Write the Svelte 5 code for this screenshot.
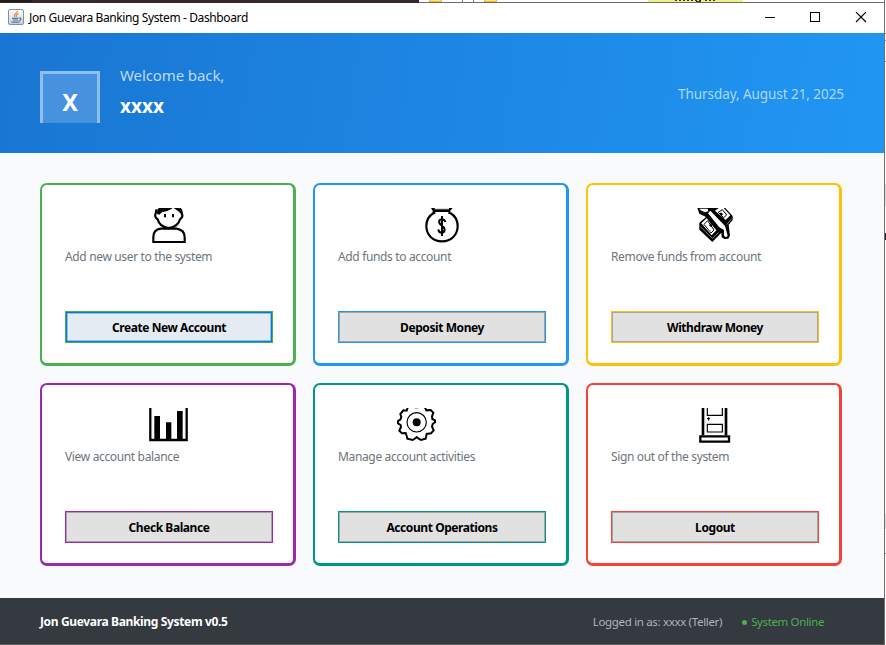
<script>
  const cards = [
    { icon: 'user', view: '357 99 120 105', offset: 84, text: 'Add new user to the system', action: 'Create New Account', color: '#4caf50', focused: true },
    { icon: 'bag', view: '351 99 120 105', offset: 84, text: 'Add funds to account', action: 'Deposit Money', color: '#2196f3' },
    { icon: 'cash', view: '345 99 120 105', offset: 84, text: 'Remove funds from account', action: 'Withdraw Money', color: '#ffc107' },
    { icon: 'chart', view: '357 99 120 105', offset: 84, text: 'View account balance', action: 'Check Balance', color: '#9c27b0' },
    { icon: 'gear', view: '273 99 120 105', offset: 58, text: 'Manage account activities', action: 'Account Operations', color: '#009688' },
    { icon: 'door', view: '345 99 120 105', offset: 84, text: 'Sign out of the system', action: 'Logout', color: '#f44336' }
  ];
</script>

<div class="desktop">
  <svg class="backdrop" width="886" height="645" viewBox="0 0 886 645" shape-rendering="crispEdges">
    <path fill="#fff" d="M0 0h886v645H0z" />
    <path fill="#35282c" d="M0 0h419v3H0z" />
    <path fill="#241b1f" d="M0 0h32v2H0z" />
    <path fill="#6b6b6b" d="M419 2h466v1H419z" />
    <path fill="#ffe27a" stroke="#e9b93c" d="M429.500-1v2.500h12V-1M484.500-1v2.500h12V-1" />
    <path fill="none" stroke="#777" d="M462.500 0v2M473.500 0v2" />
    <path fill="#f2ef84" d="M648 0h95v2h-95z" />
    <path stroke="#333" stroke-dasharray="2 2" d="M675 .5h26M705 .5h10" />
    <path stroke="#333" d="M696 1.500h5" />
    <path fill="#ddd" d="M885 184h1v22h-1zM885 514h1v15h-1z" />
    <path fill="#888" d="M885 33h1v1h-1zM885 40h1v1h-1zM885 61h1v1h-1zM885 553h1v1h-1z" />
    <path fill="#223" d="M885 233h1v7h-1z" />
  </svg>

  <main class="window">
    <div class="titlebar">
      <svg class="java" width="16" height="16" viewBox="0 0 16 16">
        <defs><linearGradient id="tile" x1="0" y1="0" x2="0" y2="1"><stop offset="0" stop-color="#fff" /><stop offset="1" stop-color="#c3d0dd" /></linearGradient></defs>
        <rect x=".5" y=".5" width="15" height="15" rx="1.500" fill="url(#tile)" stroke="#7f91a3" />
        <path d="M9.500 2C10 4 5.300 5 6.500 8M10.500 4.500C7.500 6 8.500 6.500 8.300 8" fill="none" stroke="#ed8730" stroke-width="1.300" />
        <path d="M4 9.300h6.500M5 11h5M3.500 13.200h8M11 9c3-.5 2 2.500 0 2.500" fill="none" stroke="#527b9e" stroke-width="1.200" />
      </svg>
      <span class="title">Jon Guevara Banking System - Dashboard</span>
      <svg class="controls" width="102" height="11" viewBox="0 0 102 11" fill="none" stroke="#000">
        <path d="M0 5.500h10M45.500.5h9v9h-9z" shape-rendering="crispEdges" />
        <path d="m91 0 10 10m0-10L91 10" stroke-width="1.100" />
      </svg>
    </div>

    <header>
      <div class="avatar"><span>X</span></div>
      <div class="greeting">
        <span class="welcome">Welcome back,</span>
        <strong>xxxx</strong>
      </div>
      <span class="date">Thursday, August 21, 2025</span>
    </header>

    <section class="grid">
      {#each cards as card}
        <article style="--accent: {card.color}">
          <svg class="icon" style="margin-left: {card.offset}px" width="40" height="35" viewBox={card.view} fill="none" stroke="#000" stroke-width="7">
            {#if card.icon === 'user'}
              <path d="M380 103c-3 7-3 10-3 13-3 4-1 14 6 17 4 17 15 24 33 26 19-2 30-10 34-26 8-5 8-12 5-17 1-7 0-11-6-16M370 201v-15q0-22 22-25h48q24 4 24 25v15z" stroke-width="6.500" />
              <path d="M387 99h41q-13 11-31 12l-9 8-8-3 3-14zM431 99h17l8 15-5 1-8-8z" fill="#000" stroke="none" />
              <path d="M405 117v10M429 117v10" stroke-width="6" />
            {:else if card.icon === 'bag'}
              <path d="M378 99h65l-7 8 1 10h-54v-10z" fill="#000" stroke="none" />
              <path d="M389 99h43v4h-43z" fill="#ddd" stroke="none" />
              <path d="M391 111h39v8h-39z" fill="#fff" stroke="none" />
              <path d="M386 114c-15 9-22 23-22 39 0 26 19 46 47 46s47-20 47-46c0-16-7-30-22-39" stroke-width="6.500" />
              <path d="M421 141q-3-10-12-8-8 2-6 10c2 9 17 10 16 21-1 12-18 12-19-1M411 123v60" stroke-width="6" />
            {:else if card.icon === 'cash'}
              <path d="m358 143 20-17-20-10-6-17h84l22 24v12l-12 14 4 33-5 9-12 1-8-5-1-14-27 28-39-37z" fill="#000" stroke="none" />
              <path d="m364 145 16-15 29 36-14 15zM405 107l11-8h15l20 22-14 14z" fill="#fff" stroke="none" />
              <path d="m384 115 7-8 44 46 8 29-5 5-6-5v-17l-14-8zM358 101h25l2 8-10 3-13-6z" fill="#fff" stroke="none" />
              <path d="m372 148 11-11 19 28-9 9zM415 112l12-8 13 16-9 8z" stroke-width="3" />
              <path d="m392 145 6 6-5 5-6-5zM423 112l6 6-4 4-6-6z" fill="#000" stroke="none" />
              <path d="m362 156 35 34 18-17M440 149l15-18" stroke="#fff" stroke-width="1.500" />
              <path d="m374 143 5 5M388 170l6-5M433 107l7 9" stroke="#d6bd79" stroke-width="2" />
            {:else if card.icon === 'chart'}
              <path d="M361 99v96h109V99" />
              <path d="M373 123h17v69h-17zM408 142h16v50h-16zM441 108h17v84h-17z" fill="#000" stroke="none" />
              <path d="M366 99v90M464 99v90" stroke="#b9dff5" stroke-width="1" />
            {:else if card.icon === 'gear'}
              <path d="m308 99-3 8-10-1-9 11 3 9-3 8-7 4v7l8 5 1 6-5 11 8 8 11-1 4 12 1 5 16 4 8-5 4-4 5 4 8 5 14-4 3-14 13-2 8-9-5-11 2-8 7-5v-6l-8-4-1-8 4-11-8-8-13 1-4-8" stroke-width="6" />
              <circle cx="335" cy="142" r="29" stroke-width="3.500" />
              <circle cx="335" cy="142" r="12" fill="#000" stroke="none" />
              <path d="M329 100h11" stroke="#777" stroke-width="2" />
            {:else}
              <path d="M369 99v82M438 99v82" stroke-width="8" />
              <path d="M361 184h86v16h-86z" />
              <path d="M382 99v22h45V99M382 148h45v23h-45z" stroke-width="3.500" />
              <path d="M386 126v11M381 131h9" stroke-width="3" />
              <path d="M375 99v78M431 99v78" stroke="#b9dff5" stroke-width="1" />
            {/if}
          </svg>
          <p>{card.text}</p>
          <button class:focused={card.focused}>{card.action}</button>
        </article>
      {/each}
    </section>

    <footer>
      <strong>Jon Guevara Banking System v0.5</strong>
      <span class="login">Logged in as: xxxx (Teller)</span>
      <i></i>
      <span class="online">System Online</span>
    </footer>
  </main>
</div>

<style>
  .desktop { position: relative; width: 886px; height: 645px; overflow: hidden; font-family: "Noto Sans", "Open Sans", sans-serif; }
  .backdrop { position: absolute; inset: 0; }
  .window { position: relative; box-sizing: border-box; width: 885px; height: 645px; padding-top: 3px; border-right: 1px solid #707070; border-bottom: 1px solid #5e5e5e; display: flex; flex-direction: column; white-space: nowrap; }
  .titlebar { height: 30px; flex: none; box-sizing: border-box; padding: 0 17px 0 8px; display: flex; align-items: center; background: #fff; }
  .java { margin-top: -2px; }
  .title { margin-left: 5px; font-size: 12px; letter-spacing: -.385px; line-height: 20px; color: #000; }
  .controls { margin-left: auto; margin-top: -1px; }
  header { height: 120px; flex: none; box-sizing: border-box; padding: 0 40px; display: flex; background: linear-gradient(98deg, #1976d2, #2196f3); color: #fff; }
  .avatar { box-sizing: border-box; width: 60px; height: 52px; margin-top: 38px; border: 3px solid #8fbfeb; border-bottom: 0; background: #4692de; text-align: center; font-size: 23.5px; font-weight: 700; line-height: 56px; }
  .greeting { margin: 32px 0 0 20px; display: flex; flex-direction: column; }
  .welcome { font-size: 15px; letter-spacing: -.1px; line-height: 21px; color: #bddaf5; }
  .greeting strong { font-size: 19px; line-height: 26px; margin-top: 7px; }
  .date { margin: 51px 0 0 auto; font-size: 13.5px; letter-spacing: -.06px; line-height: 20px; color: #add8fb; }
  .grid { flex: 1; box-sizing: border-box; padding: 30px 40px; display: grid; grid-template-columns: repeat(3, 256px); grid-template-rows: repeat(2, 183px); gap: 17px; background: #f8fafc; }
  article { box-sizing: border-box; border: solid var(--accent); border-width: 2px 3px 3px 2px; border-radius: 7px; padding: 23px 20px 20px 23px; display: flex; flex-direction: column; background: #fff; }
  .icon { display: block; flex: none; }
  p { margin: 5px 0 0; font-size: 12px; letter-spacing: -.35px; line-height: 18px; color: #6c757d; }
  button { box-sizing: border-box; width: 208px; height: 32px; margin: auto 0 0; padding: 1px 0 0; border: 1px solid var(--accent); border-radius: 0; background: #e1e1e1; box-shadow: inset 0 0 0 1px #a5a5a5; font: 700 12px/29px "Noto Sans", "Open Sans", sans-serif; letter-spacing: -.42px; color: #000; }
  button.focused { background: #e4ebf3; box-shadow: inset 0 0 0 1px #0078d7, inset 0 0 0 2px #8ec3ef; }
  footer { height: 46px; flex: none; box-sizing: border-box; padding: 1px 60px 0 40px; display: flex; align-items: center; background: #343a40; font-size: 11.5px; letter-spacing: -.33px; line-height: 18px; color: #adb5bd; }
  footer strong { margin-right: auto; font-size: 12px; letter-spacing: -.35px; color: #fff; }
  .login { margin-right: 20px; }
  i { width: 5px; height: 5px; margin: 2px 4px 0 0; border-radius: 50%; background: #4caf50; }
  .online { color: #4caf50; letter-spacing: -.37px; }
</style>
